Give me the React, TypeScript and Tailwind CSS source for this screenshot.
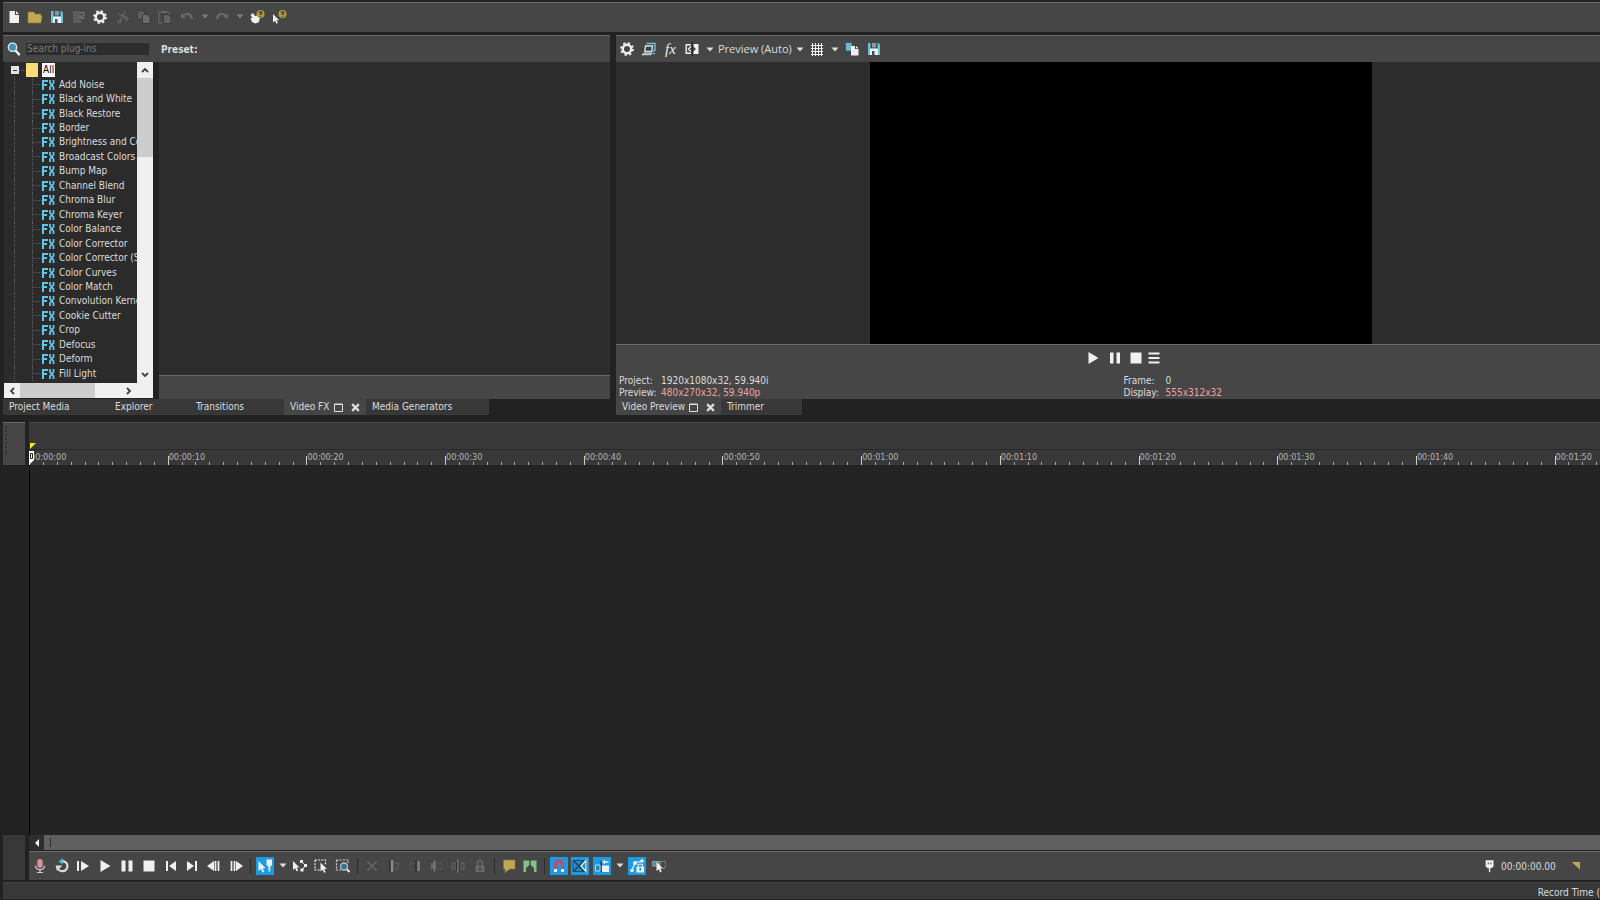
import React from 'react';
import clsx from 'clsx';

const plugins = [
  'Add Noise', 'Black and White', 'Black Restore', 'Border', 'Brightness and Contrast', 'Broadcast Colors', 'Bump Map',
  'Channel Blend', 'Chroma Blur', 'Chroma Keyer', 'Color Balance', 'Color Corrector', 'Color Corrector (Secondary)',
  'Color Curves', 'Color Match', 'Convolution Kernel', 'Cookie Cutter', 'Crop', 'Defocus', 'Deform', 'Fill Light',
];

const times = ['00:00:00', '00:00:10', '00:00:20', '00:00:30', '00:00:40', '00:00:50', '00:01:00', '00:01:10', '00:01:20', '00:01:30', '00:01:40', '00:01:50'];

// one ruler step as a share of the visible timeline
const STEP = 8.828;

const W = '#f0f0f0';
const DIM = '#686868';
const DARK = '#333333';
const BLUE = '#6cc0dc';

const cursor = 'M0 0V10L2.4 8L4 11.5L5.8 10.7L4.2 7.3H7.2Z';

const gear = (
  <g fill="none" stroke={W}>
    <circle cx="8" cy="8" r="4.2" strokeWidth="2.4" />
    <circle cx="8" cy="8" r="6" strokeWidth="1.8" strokeDasharray="2.35 2.36" />
  </g>
);
const floppy = (
  <>
    <path d="M2 2H12.5L14 3.5V14H2Z" fill={BLUE} />
    <path d="M4.5 2H11.5V7H4.5Z" fill="#3a4a52" />
    <path d="M6 2H10V6.5H6Z" fill="#8d9ba0" />
    <path d="M4 8H12V14H4Z" fill={W} />
    <path d="M6 10H8.5V14H6Z" fill="#45505a" />
  </>
);
const help = (
  <>
    <circle cx="11.5" cy="5" r="4" fill="#b39a3c" />
    <path d="M10.2 4.2C10.2 2.2 13 2.4 12.8 4.2C12.7 5 11.5 5 11.5 6M11.5 7V7.8" fill="none" stroke="#2c2a20" strokeWidth="1.2" />
  </>
);
const lock = (
  <>
    <path d="M5.5 8V5.5A2.5 3 0 0 1 10.5 5.5V8" fill="none" stroke={DIM} strokeWidth="1.7" />
    <path d="M3.5 7.5H12.5V14H3.5Z" fill={DIM} />
    <path d="M7.3 9.5H8.7V12H7.3Z" fill={DARK} />
  </>
);

const icons: Record<string, React.ReactNode> = {
  newFile: <path d="M3.5 2H9V6H13V14H3.5ZM10 2L13 5H10Z" fill={W} />,
  open: <path d="M1 3H7L8 5H14V7H15L14 14H1Z" fill="#bfa852" stroke="#8f7c38" strokeWidth=".6" />,
  save: floppy,
  render: <><path d="M2 2H9V14H2Z" fill="#5d5d5d" /><path d="M9 4.5C11 2.5 14 3.5 13 6L10.5 8.5M10 6V9.5H13.5M10 12V13.5" fill="none" stroke="#6d6d6d" strokeWidth="1.6" /></>,
  gear,
  cut: <g fill="none" stroke={DIM} strokeWidth="1.2"><path d="M11 2L6.5 11M4 5L12 8" /><circle cx="5.5" cy="12.5" r="1.5" /><circle cx="12.5" cy="9.5" r="1.5" /></g>,
  copy: <><path d="M1.5 2H8.5V10H1.5Z" fill="#5e5e5e" stroke={DARK} strokeWidth=".6" /><path d="M6.5 5.5H11L14 8.5V14.5H6.5Z" fill="#6c6c6c" stroke={DARK} strokeWidth=".8" /></>,
  paste: <><path d="M2 3H12V14H2Z" fill="none" stroke="#5e5e5e" strokeWidth="1.5" /><path d="M5 2H9V4H5Z" fill={DIM} /><path d="M6.5 5.5H11.5L14 8V14.5H6.5Z" fill="#626262" stroke={DARK} strokeWidth=".8" /></>,
  undo: <path d="M2 4V9H7L5 7.2C7.5 5 11 5.5 12 10L14 10C13.5 3.5 7.5 2.5 3.8 5.8Z" fill={DIM} />,
  redo: <path d="M14 4V9H9L11 7.2C8.5 5 5 5.5 4 10L2 10C2.5 3.5 8.5 2.5 12.2 5.8Z" fill={DIM} />,
  tour: <><path d="M1.5 6L4 4L6 7L8 6.5L11 8L10 13L6.5 14.5L3 13L1.5 9L3.5 9Z" fill={W} />{help}</>,
  whats: <><path d={cursor} transform="translate(2 5) scale(.85)" fill={W} />{help}</>,
  search: <><path d="M9.5 9.5L14.5 15" stroke={W} strokeWidth="2.6" /><circle cx="6.3" cy="6" r="4.8" fill="#3f94b5" stroke="#dcecf2" strokeWidth="1.5" /></>,
  monitor: <><path d="M5.5 2.5H14V9.5H12" fill="none" stroke={BLUE} strokeWidth="1.4" /><path d="M4.5 5H11.5L10.8 10.5H3.8Z" fill="#3b464c" stroke="#d6e2e6" strokeWidth="1.4" /><path d="M1.5 13.8H9.5L10.5 12.2H3Z" fill="#4a5960" stroke="#d6e2e6" strokeWidth="1.1" /><path d="M11.5 12.5H14" stroke={BLUE} strokeWidth="1.5" /></>,
  split: <><path d="M7 3.7H2.2V12.3H7M7 5.5L4.5 8L7 10.5" fill="none" stroke={W} strokeWidth="1.4" /><path d="M9.5 3H14.5V13H9.5V10.5L12 8L9.5 5.5Z" fill={W} /><path d="M8.2 1V15" stroke="#222" strokeWidth="1.2" /></>,
  grid: <path d="M2 4.5H14M2 7.5H14M2 10.5H14M2 13.5H14M3.5 2V15M6.5 2V15M9.5 2V15M12.5 2V15" stroke={W} shapeRendering="crispEdges" />,
  copyFrame: <><path d="M1.5 1.5H8V10H1.5Z" fill="#74b4cc" stroke="#35505c" strokeWidth=".7" /><path d="M7 5H11V8H14.5V14.5H7ZM12 5L14.5 7.2H12Z" fill={W} /></>,
  play: <path d="M3.5 2L13.5 8L3.5 14Z" fill={W} />,
  pause: <path d="M2.5 2.5H6.5V13.5H2.5ZM9.5 2.5H13.5V13.5H9.5Z" fill={W} />,
  pauseSmall: <path d="M3 2.5H6.5V13.5H3ZM9.5 2.5H13V13.5H9.5Z" fill={W} />,
  stop: <path d="M2.5 2.5H13.5V13.5H2.5Z" fill={W} />,
  menu: <path d="M2.5 3.5H13.5M2.5 8H13.5M2.5 12.5H13.5" stroke={W} strokeWidth="1.8" />,
  mic: <><rect x="5.3" y="1" width="5.4" height="9" rx="2.7" fill="#dc8f95" /><path d="M3.5 7.5C3.5 13 12.5 13 12.5 7.5M8 12V14.5M5 14.5H11" fill="none" stroke="#c9c9c9" strokeWidth="1.2" /></>,
  loop: <><path d="M9 3.2A5 5 0 1 1 3.6 9.5" fill="none" stroke="#dcdcdc" strokeWidth="2.2" /><path d="M1.5 7.5H8.5L3 13Z" fill="#dcdcdc" /><path d="M9 0L4.5 3.5L9 6.5Z" fill="#62afd0" /></>,
  playStart: <><path d="M3 3V13" stroke={W} strokeWidth="2" /><path d="M6 3L14 8L6 13Z" fill={W} /></>,
  prev: <><path d="M4 3V13" stroke={W} strokeWidth="2" /><path d="M13 3L6 8L13 13Z" fill={W} /></>,
  next: <><path d="M12 3V13" stroke={W} strokeWidth="2" /><path d="M3 3L10 8L3 13Z" fill={W} /></>,
  stepBack: <><path d="M8 3L1 8L8 13Z" fill={W} /><path d="M9.5 3V13M12.5 3V13" stroke={W} strokeWidth="1.7" /></>,
  stepFwd: <><path d="M8 3L15 8L8 13Z" fill={W} /><path d="M3.5 3V13M6.5 3V13" stroke={W} strokeWidth="1.7" /></>,
  edit: <><path d={cursor} transform="translate(1.5 3)" fill={W} /><path d="M9.5 1.5H15V7L13.2 9V13.5H11.5V9L9.5 7Z" fill={W} /></>,
  envelope: <><path d={cursor} transform="translate(1 3) scale(.9)" fill={W} /><path d="M9.5 3.5L13.5 7.5L10 12" fill="none" stroke={W} /><path d="M8 2H11V5H8ZM12 6H15V9H12ZM8.5 10.5H11.5V13.5H8.5Z" fill={W} /></>,
  selection: <><path d="M2 2H12.5V7M2 2V12H7" fill="none" stroke={W} strokeWidth="1.2" strokeDasharray="2 1.2" /><path d={cursor} transform="translate(7.5 4.5) scale(.9)" fill={W} /></>,
  zoom: <><path d="M1.5 2H13V5M1.5 2V12H6" fill="none" stroke="#cfcfcf" strokeWidth="1.2" strokeDasharray="2 1.2" /><path d="M11.5 11L14.5 14" stroke={W} strokeWidth="1.8" /><circle cx="9" cy="8.5" r="3.5" fill="#3e7189" stroke="#a7c7d3" strokeWidth="1.3" /></>,
  del: <path d="M3.5 3.5L12.5 12.5M12.5 3.5L3.5 12.5" stroke={DIM} strokeWidth="1.3" />,
  trim: <><path d="M5 2V14" stroke={DARK} strokeWidth="2" /><path d="M7 2V14" stroke="#8a8a8a" strokeWidth="2.4" /><path d="M9 5H13V11H9" fill="none" stroke="#606060" /></>,
  trimStart: <><path d="M8 5H3V11H8" fill="none" stroke="#585858" strokeDasharray="2 1" /><path d="M9 2V14" stroke={DARK} strokeWidth="2" /><path d="M10 3H13V13H10Z" fill="#787878" /></>,
  trimEnd: <><path d="M8 5H13V11H8" fill="none" stroke="#585858" strokeDasharray="2 1" /><path d="M2 5H7V11H2Z" fill={DIM} /><path d="M5.5 2V14" stroke="#777" strokeWidth="1.4" /></>,
  splitEvent: <><path d="M2 5H5V11H2ZM11 5H14V11H11Z" fill="none" stroke={DIM} /><path d="M8 1.5V14.5" stroke="#888" /><path d="M6.5 4V12M9.5 4V12" stroke={DARK} /></>,
  lock,
  marker: <path d="M2.5 2H14V11H9L4 14.5V11H2.5Z" fill="#bfa84f" stroke="#857638" strokeWidth=".6" />,
  region: <path d="M1.5 2.5H7.3V7L4 10V14H1.5ZM8.7 2.5H14.5V14H12V10L8.7 7Z" fill="#80c48a" />,
  magnet: <><path d="M4.5 12V6.5A3.5 3.5 0 0 1 11.5 6.5V12" fill="none" stroke="#d2445c" strokeWidth="2.8" /><path d="M3 11H6V14H3ZM10 11H13V14H10Z" fill={W} /></>,
  crossfade: <><path d="M1 2.5H14.5V13.5H1Z" fill="#248bc3" stroke="#194e70" /><path d="M1.5 2.5L12 13.5M12 2.5L1.5 13.5" stroke="#14405f" strokeWidth="1.2" /><path d="M14 2.5L9 8L14 13.5Z" fill="none" stroke={W} strokeWidth="1.2" /></>,
  ripple: <><path d="M7 3V14" stroke="#16455f" strokeWidth="1.5" /><path d="M1.5 7H6V13H1.5Z" fill="#2386b8" stroke="#bcdcea" /><path d="M8 7.5H15V14H8Z" fill={W} /><path d="M8 4L11 1.5V3.3H14.5V4.8H11V6.5Z" fill={W} /></>,
  lockEnv: <><path d="M3 12L6 5L13 3" fill="none" stroke={W} strokeWidth="1.2" /><circle cx="3" cy="12.5" r="1.8" fill={W} /><circle cx="6" cy="5" r="2" fill={W} /><circle cx="13" cy="3" r="1.8" fill={W} /><path d="M9 9V7.5C9 5.5 13.5 5.5 13.5 7.5V9" fill="none" stroke={W} strokeWidth="1.2" /><path d="M7.5 8.8H15V14.5H7.5Z" fill={W} /><path d="M11.2 10V12.5" stroke="#1c6e9c" strokeWidth="1.5" /></>,
  ignore: <><path d="M1.5 3.5H9V8H1.5Z" fill="#4b8ca6" stroke="#9b9b9b" /><path d="M10 3.5H14.5V6.5M14 8V10.5H11" fill="none" stroke="#a58a8a" strokeDasharray="2 1" /><path d={cursor} transform="translate(5.5 4) scale(.9)" fill={W} /></>,
  pin: <><path d="M3 1.5H12V8.5L9.5 10.5H5.5L3 8.5Z" fill={W} /><path d="M7.5 10V15" stroke={W} strokeWidth="1.5" /><path d="M6 4V6M9 4V6" stroke="#444" strokeWidth="1.2" /></>,
  corner: <path d="M3 3.5H12.5V12Z" fill="#bfa84f" />,
};

function Icon({ name, size = 'size-4' }: { name: string; size?: string }) {
  return <svg viewBox="0 0 16 16" className={clsx('shrink-0', size)} aria-hidden="true">{icons[name]}</svg>;
}

function Tool({ name, on, className = 'w-[22px]', size }: { name: string; on?: boolean; className?: string; size?: string }) {
  return (
    <button type="button" aria-label={name} className={clsx('flex h-[18px] shrink-0 items-center justify-center', className)}>
      <span className={clsx('flex h-[18px] w-[18px] items-center justify-center', on && 'bg-[#1b9be6]')}>
        <Icon name={name} size={size} />
      </span>
    </button>
  );
}

function Caret({ dim, className = 'w-[13px]' }: { dim?: boolean; className?: string }) {
  return (
    <button type="button" aria-label="More" className={clsx('flex h-[18px] shrink-0 items-center justify-center', className)}>
      <svg viewBox="0 0 8 5" className="h-[5px] w-2"><path d="M.5 .5H7.5L4 4.5Z" fill={dim ? '#7a7a7a' : '#dddddd'} /></svg>
    </button>
  );
}

// evenly spread group of tools
function Group({ names, on, className }: { names: string[]; on?: boolean; className: string }) {
  return (
    <div className={clsx('grid shrink-0 auto-cols-fr grid-flow-col', className)}>
      {names.map((n) => <Tool key={n} name={n} on={on} className="w-full" />)}
    </div>
  );
}

const Sep = () => <div className="mx-[3px] h-4 w-px shrink-0 bg-[#2c2c2c]" />;

function Chevron({ d }: { d: string }) {
  return <svg viewBox="0 0 8 8" className="size-2"><path d={d} fill="none" stroke="#404040" strokeWidth="1.8" /></svg>;
}

function Tab({ label, active, className }: { label: string; active?: boolean; className: string }) {
  return (
    <div className={clsx('flex h-4 shrink-0 items-center whitespace-nowrap leading-4', active ? 'bg-[#464646]' : 'bg-[#383838]', className)}>
      <button type="button" className="pl-[6px] text-left">{label}</button>
      {active && (
        <div className="ml-auto flex pr-[2px]">
          <button type="button" aria-label="Maximize" className="flex w-4 justify-center">
            <svg viewBox="0 0 9 9" className="size-[9px]"><path d="M.5 1H8.5V8.5H.5ZM0 1.5H9" fill="none" stroke="#dedede" /></svg>
          </button>
          <button type="button" aria-label="Close" className="flex w-[18px] justify-center">
            <svg viewBox="0 0 8 8" className="size-[9px]"><path d="M1 1L7 7M7 1L1 7" stroke="#dedede" strokeWidth="2" /></svg>
          </button>
        </div>
      )}
    </div>
  );
}

function PluginTree() {
  return (
    <div className="flex h-[321px]">
      <ul className="grid h-full min-w-0 flex-1 auto-rows-fr overflow-hidden whitespace-nowrap bg-[#2b2b2b] pb-[2px] pt-px">
        <li className="flex items-center">
          <span className="ml-[7px] flex size-2 items-center justify-center bg-[#e4e4e4]"><span className="h-px w-1 bg-[#333]" /></span>
          <span className="w-[7px] border-t border-dotted border-[#666]" />
          <span className="h-[14px] w-3 bg-[#fbdc7a]" />
          <span className="ml-1 bg-white px-px leading-[14px] text-black">All</span>
        </li>
        {plugins.map((p) => (
          <li key={p} className="flex items-center">
            <span className="ml-[10px] h-full w-[18px] shrink-0 border-l border-dotted border-[#5c5c5c]" />
            <span className="flex h-full w-[10px] shrink-0 items-center border-l border-dotted border-[#5c5c5c]">
              <span className="w-full border-t border-dotted border-[#5c5c5c]" />
            </span>
            <svg viewBox="0 0 13 10" className="h-[10px] w-[13px] shrink-0">
              <path d="M1 10V1H6M1 5H5" fill="none" stroke="#62c4e6" strokeWidth="2" />
              <path d="M8 0V3L11.5 7V10M11.5 0V3L8 7V10" fill="none" stroke="#62c4e6" strokeWidth="1.8" />
            </svg>
            <span className="ml-1 leading-[14px]">{p}</span>
          </li>
        ))}
      </ul>
      <div className="flex w-4 shrink-0 flex-col items-center bg-[#f0f0f0]">
        <div className="flex h-4 items-center"><Chevron d="M1 6L4 3L7 6" /></div>
        <div className="h-[79px] w-full bg-[#cdcdcd]" />
        <div className="flex flex-1 items-end pb-1"><Chevron d="M1 2L4 5L7 2" /></div>
      </div>
    </div>
  );
}

function FxPanel() {
  return (
    <section className="flex w-[607px] shrink-0 flex-col">
      <div className="flex h-[27px] items-center border-t border-[#6a6a6a] bg-[#464646]">
        <div className="flex w-[155px] items-center pl-1">
          <Icon name="search" size="size-[14px]" />
          <input aria-label="Search plug-ins" placeholder="Search plug-ins" className="ml-[5px] h-3 w-[123px] bg-[#2d2d2d] px-px leading-3 text-[#ddd] outline-none placeholder:text-[#7c7c7c]" />
        </div>
        <span className="pl-[3px] pt-px font-bold">Preset:</span>
      </div>
      <div className="flex h-[337px]">
        <div className="flex w-[150px] shrink-0 flex-col pl-px">
          <PluginTree />
          <div className="flex h-[15px] items-center bg-[#f0f0f0]">
            <div className="flex w-4 justify-center"><Chevron d="M6 1L3 4L6 7" /></div>
            <div className="h-full w-[75px] bg-[#cdcdcd]" />
            <div className="ml-[30px]"><Chevron d="M2 1L5 4L2 7" /></div>
          </div>
        </div>
        <div className="ml-[6px] flex flex-1 flex-col bg-[#2d2d2d]">
          <div className="flex-1" />
          <div className="h-6 border-t border-[#6a6a6a] bg-[#464646]" />
        </div>
      </div>
      <div className="flex">
        <Tab label="Project Media" className="w-[106px]" />
        <Tab label="Explorer" className="w-[81px]" />
        <Tab label="Transitions" className="w-[94px]" />
        <Tab label="Video FX" active className="w-[82px]" />
        <Tab label="Media Generators" className="w-[123px]" />
      </div>
    </section>
  );
}

function Info({ label, value, alert }: { label: string; value: string; alert?: boolean }) {
  return (
    <div className="flex h-3 whitespace-nowrap leading-3">
      <dt className="w-[42px]">{label}</dt>
      <dd className={clsx(alert && 'text-[#f0a0a0]')}>{value}</dd>
    </div>
  );
}

function PreviewPanel() {
  return (
    <section className="min-w-0 flex-1 overflow-hidden">
      {/* the docked window runs past the right edge of the screen */}
      <div className="w-[calc(100%+26px)]">
        <div className="flex h-[27px] items-center border-t border-[#6a6a6a] bg-[#464646]">
          <Tool name="gear" />
          <Tool name="monitor" />
          <button type="button" className="w-[21px] text-center font-['Liberation_Serif',serif] text-[15px] italic leading-4 text-[#f0f0f0]">fx</button>
          <Tool name="split" />
          <Caret />
          <button type="button" className="ml-[2px] w-[75px] whitespace-nowrap text-left font-['Open_Sans',sans-serif] text-[11px]">Preview (Auto)</button>
          <Caret />
          <Tool name="grid" />
          <Caret />
          <Tool name="copyFrame" />
          <Tool name="save" />
        </div>
        <div className="flex h-[282px] justify-center bg-[#2d2d2d]">
          <div className="aspect-video h-full bg-black" />
        </div>
        <div className="h-[55px] border-t border-[#6a6a6a] bg-[#464646] pt-1">
          <div className="flex justify-center pl-px">
            <Tool name="play" />
            <Tool name="pauseSmall" />
            <Tool name="stop" className="w-5" />
            <Tool name="menu" className="w-4" />
          </div>
          <dl className="flex pl-[3px] pt-2 text-[10px]">
            <div className="w-1/2">
              <Info label="Project:" value="1920x1080x32, 59.940i" />
              <Info label="Preview:" value="480x270x32, 59.940p" alert />
            </div>
            <div className="pl-px">
              <Info label="Frame:" value="0" />
              <Info label="Display:" value="555x312x32" alert />
            </div>
          </dl>
        </div>
        <div className="flex">
          <Tab label="Video Preview" active className="w-[105px]" />
          <Tab label="Trimmer" className="w-[81px]" />
        </div>
      </div>
    </section>
  );
}

function Ruler() {
  return (
    <div className="flex h-4 overflow-hidden border-t border-[#2a2a2a] bg-[#383838]">
      {times.map((t) => (
        <div key={t} className="relative shrink-0" style={{ width: `${STEP}%` }}>
          <div className="flex h-full items-end">
            {Array.from({ length: 10 }, (_, i) => (
              <span key={i} className={clsx('flex-1 border-l', i === 0 ? 'h-[9px] border-[#cfcfcf]' : 'h-[3px] border-[#a8a8a8]')} />
            ))}
          </div>
          <span className="absolute left-px top-[2px] text-[9px] leading-[11px] text-[#b5b5b5]">{t}</span>
        </div>
      ))}
    </div>
  );
}

function Timeline() {
  return (
    <section className="flex min-h-[300px] flex-1 gap-1">
      <div className="flex w-[22px] shrink-0 flex-col">
        <div className="h-[43px] border-t border-[#6a6a6a] bg-[#464646] pl-[2px] pt-1">
          <div className="h-7 border-l-2 border-dotted border-[#333]" />
        </div>
        <div className="flex-1" />
        <div className="h-[45px] bg-[#383838]" />
      </div>
      <div className="relative flex min-w-0 flex-1 flex-col">
        <div className="h-[27px] border-t border-[#4a4a4a] bg-[#383838]" />
        <Ruler />
        <div className="flex-1 border-l border-black bg-[#232323]" />
        <div className="flex h-[15px] items-center bg-[#606060]">
          <button type="button" aria-label="Scroll left" className="flex h-full w-[15px] items-center justify-center bg-[#2d2d2d]">
            <svg viewBox="0 0 4 8" className="h-2 w-1"><path d="M4 0V8L0 4Z" fill="#f0f0f0" /></svg>
          </button>
          <div className="ml-[6px] h-[9px] w-px bg-[#2d2d2d]" />
        </div>
        <div className="mt-px flex h-[29px] items-center border-t border-[#6a6a6a] bg-[#464646] pb-px">
          <Group className="w-[218px]" names={['mic', 'loop', 'playStart', 'play', 'pause', 'stop', 'prev', 'next', 'stepBack', 'stepFwd']} />
          <Sep />
          <Tool name="edit" on />
          <Caret />
          <Group className="w-[65px]" names={['envelope', 'selection', 'zoom']} />
          <Sep />
          <Group className="w-[130px]" names={['del', 'trim', 'trimStart', 'trimEnd', 'splitEvent', 'lock']} />
          <Sep />
          <Group className="w-[43px]" names={['marker', 'region']} />
          <Sep />
          <Group className="w-[65px]" on names={['magnet', 'crossfade', 'ripple']} />
          <Caret />
          <Tool name="lockEnv" on />
          <Tool name="ignore" />
          <div className="ml-auto flex items-center pr-[17px]">
            <Icon name="pin" size="size-[14px]" />
            <output className="ml-1 w-[68px] pt-px">00:00:00.00</output>
            <Icon name="corner" size="size-[14px]" />
          </div>
        </div>
        {/* loop marker and playhead over the ruler */}
        <svg viewBox="0 0 8 22" className="absolute left-0 top-[21px] h-[22px] w-2">
          <path d="M1 0H7L1 6Z" fill="#f5ee1c" />
          <path d="M0 8H5V17L0 22Z" fill="#ffffff" />
          <path d="M1.5 10.5H3.5V15.5H1.5Z" fill="none" stroke="#222" />
        </svg>
      </div>
    </section>
  );
}

export default function App() {
  return (
    <main className="flex h-screen flex-col overflow-hidden bg-[#222222] pl-[3px] pt-[2px] font-['DejaVu_Sans_Condensed','Noto_Sans',sans-serif] text-[10px] text-[#dcdcdc]">
      <header className="flex h-[30px] shrink-0 items-center border-t border-[#6a6a6a] bg-[#464646] pb-[2px]">
        <Group className="w-[195px]" names={['newFile', 'open', 'save', 'render', 'gear', 'cut', 'copy', 'paste', 'undo']} />
        <Caret dim />
        <Tool name="redo" />
        <Caret dim />
        <Tool name="tour" />
        <Tool name="whats" />
      </header>
      <div className="mt-[3px] flex shrink-0 gap-[6px]">
        <FxPanel />
        <PreviewPanel />
      </div>
      <div className="h-[7px] shrink-0" />
      <Timeline />
      <footer className="mb-px mt-[2px] flex h-[17px] shrink-0 items-center justify-end border-t border-[#444] bg-[#383838]">
        <span className="whitespace-nowrap pt-[3px]">Record Time (</span>
      </footer>
    </main>
  );
}
